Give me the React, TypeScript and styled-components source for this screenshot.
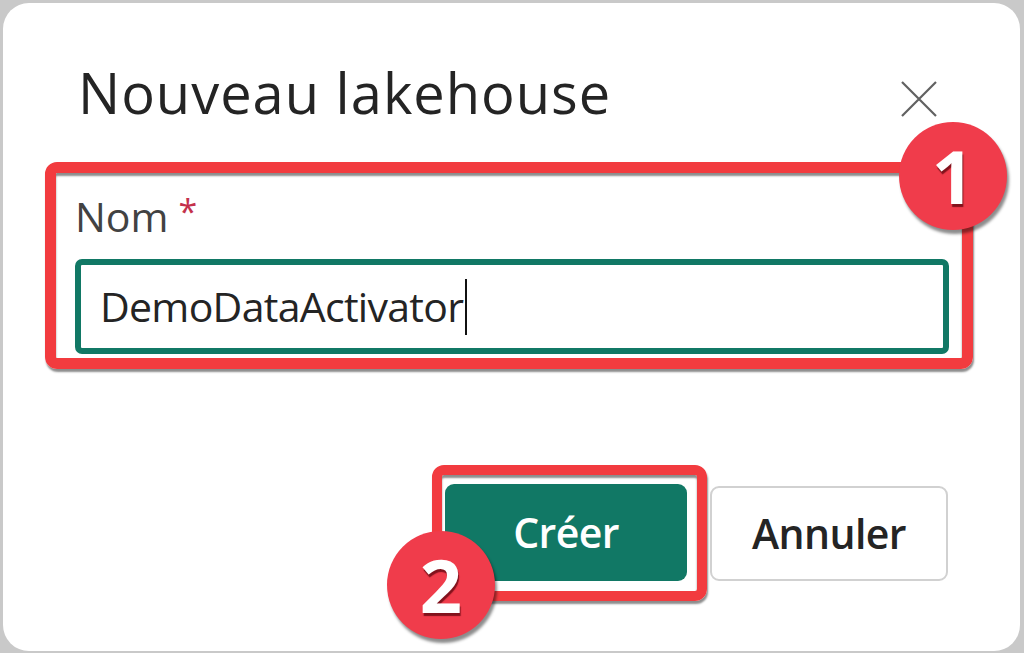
import React from "react";
import styled, { createGlobalStyle } from "styled-components";

const Global = createGlobalStyle`
  html, body { margin: 0; padding: 0; background: #c9c9c9; }
  body { font-family: "Open Sans", "Noto Sans", sans-serif; }
  #root { width: 1024px; height: 653px; }
`;

const Page = styled.div`
  width: 1024px;
  height: 653px;
  box-sizing: border-box;
  padding: 3px 4px 2px 3px;
  display: flex;
`;

const Dialog = styled.div`
  flex: 1;
  background: #fff;
  border-radius: 26px;
  display: flex;
  flex-direction: column;
  padding: 0 47px 0 42px;
`;

const Header = styled.div`
  display: flex;
  align-items: flex-start;
  justify-content: space-between;
  height: 159px;
  box-sizing: border-box;
  padding: 61px 36px 0 33px;
`;

const Title = styled.h1`
  margin: 0;
  font-size: 56px;
  line-height: 1;
  font-weight: 400;
  letter-spacing: 1px;
  color: #242424;
`;

const CloseButton = styled.button`
  margin-top: 17px;
  width: 36px;
  height: 36px;
  padding: 0;
  border: none;
  background: transparent;
  display: flex;
`;

const Highlight = styled.div<{ $pad: string; $border: number }>`
  position: relative;
  border: ${(p) => p.$border}px solid #f23b3f;
  border-radius: 12px;
  padding: ${(p) => p.$pad};
  box-shadow: 1px 3px 2px rgba(0, 0, 0, 0.45), inset 0 3px 2px rgba(0, 0, 0, 0.45);
  display: flex;
  flex-direction: column;
`;

const Label = styled.label`
  font-size: 41px;
  line-height: 1;
  color: #424242;
  margin-bottom: 22px;
`;

const Required = styled.span`
  color: #c4314b;
  margin-left: 10px;
  font-size: 34px;
  vertical-align: 8px;
`;

const InputBox = styled.div`
  height: 95px;
  box-sizing: border-box;
  border: 6px solid #117865;
  border-radius: 7px;
  padding-left: 19px;
  display: flex;
  align-items: center;
`;

const InputText = styled.span`
  font-size: 41px;
  line-height: 1;
  letter-spacing: -0.7px;
  color: #242424;
`;

const Caret = styled.span`
  width: 2px;
  height: 56px;
  background: #111;
  margin-left: 2px;
`;

const Footer = styled.div`
  margin-top: 96px;
  display: flex;
  justify-content: flex-end;
  align-items: center;
  gap: 3px;
  padding-right: 25px;
`;

const Button = styled.button<{ $primary?: boolean }>`
  box-sizing: border-box;
  width: ${(p) => (p.$primary ? 242 : 238)}px;
  height: ${(p) => (p.$primary ? 97 : 95)}px;
  border-radius: 9px;
  border: ${(p) => (p.$primary ? "none" : "2px solid #d1d1d1")};
  background: ${(p) => (p.$primary ? "#117865" : "#fff")};
  color: ${(p) => (p.$primary ? "#fff" : "#242424")};
  font-family: "Open Sans", "Noto Sans", sans-serif;
  font-size: 41px;
  font-weight: 600;
  letter-spacing: -0.6px;
  line-height: 1;
  padding: 0;
`;

const Badge = styled.div<{ $left: number; $top: number }>`
  position: absolute;
  left: ${(p) => p.$left}px;
  top: ${(p) => p.$top}px;
  width: 108px;
  height: 108px;
  border-radius: 50%;
  background: #f03c4b;
  box-shadow: 2px 4px 3px rgba(0, 0, 0, 0.45);
  display: flex;
  align-items: center;
  justify-content: center;
  color: #fff;
  font-family: "Open Sans", "Noto Sans", sans-serif;
  font-weight: 700;
  font-size: 74px;
  line-height: 1;
  text-shadow: 1px 3px 1px rgba(110, 10, 20, 0.85);
`;

export default function App() {
  return (
    <>
      <Global />
      <Page>
        <Dialog>
          <Header>
            <Title>Nouveau lakehouse</Title>
            <CloseButton aria-label="Fermer">
              <svg width="36" height="36" viewBox="0 0 36 36">
                <path d="M1 1 L35 35 M35 1 L1 35" stroke="#616161" strokeWidth="2.2" fill="none" />
              </svg>
            </CloseButton>
          </Header>
          <Highlight $border={11} $pad="21px 13px 4px 19px">
            <Label>
              Nom<Required>*</Required>
            </Label>
            <InputBox>
              <InputText>DemoDataActivator</InputText>
              <Caret />
            </InputBox>
            <Badge $left={843} $top={-51}>1</Badge>
          </Highlight>
          <Footer>
            <Highlight $border={10} $pad="9px 10px 10px 3px">
              <Button $primary>Créer</Button>
              <Badge $left={-55} $top={56}>2</Badge>
            </Highlight>
            <Button>Annuler</Button>
          </Footer>
        </Dialog>
      </Page>
    </>
  );
}
